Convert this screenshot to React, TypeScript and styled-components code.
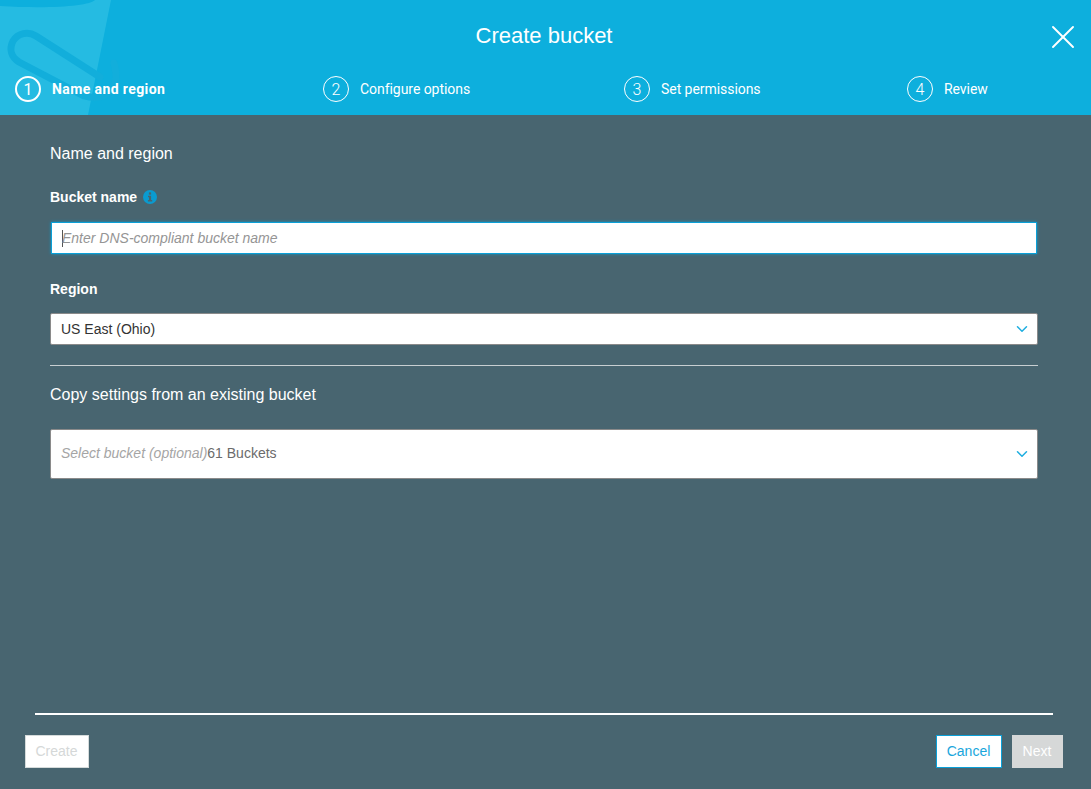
import React from "react";
import styled, { createGlobalStyle } from "styled-components";
import { ChevronDown, X } from "lucide-react";

const GlobalStyle = createGlobalStyle`
   html, body {
      margin: 0;
      height: 100%;
      background: #486570;
      font-family: "Liberation Sans", Arial, sans-serif;
   }
`;

const steps = [
   { num: 1, label: "Name and region" },
   { num: 2, label: "Configure options" },
   { num: 3, label: "Set permissions" },
   { num: 4, label: "Review" },
];

const App = () => {
   return (
      <Page>
         <GlobalStyle />
         <Header>
            <Watermark width="140" height="115" viewBox="0 0 140 115">
               <path d="M0 0H111L88 115H0Z" fill="#25bbe2" />
               <path d="M0 0H95C90 6 50 9 0 6Z" fill="#0dafdd" />
               <path
                  d="M100 77L36 36C28 31 18 33 13 41C9 49 11 57 19 62L84 96C98 100 123 97 114 63"
                  fill="none"
                  stroke="#12aedb"
                  strokeWidth="7"
                  strokeLinecap="round"
               />
            </Watermark>
            <Title>Create bucket</Title>
            <CloseButton>
               <X size={40} strokeWidth={1.15} color="#fff" />
            </CloseButton>
            <Steps>
               {steps.map((step) => (
                  <Step key={step.num}>
                     <StepNum active={step.num === 1}>{step.num}</StepNum>
                     <StepLabel active={step.num === 1}>{step.label}</StepLabel>
                  </Step>
               ))}
            </Steps>
         </Header>

         <Body>
            <SectionTitle>Name and region</SectionTitle>
            <FieldLabel>
               Bucket name
               <InfoIcon width="14" height="14" viewBox="0 0 14 14">
                  <circle cx="7" cy="7" r="7" fill="#0a9bd0" />
                  <rect x="5.9" y="2.4" width="2.2" height="2.2" fill="#486570" />
                  <path d="M5 5.8H8.1V10H9.2V11.4H4.9V10H6V7.2H5Z" fill="#486570" />
               </InfoIcon>
            </FieldLabel>
            <NameInput>
               <Caret />
               <InputPlaceholder>Enter DNS-compliant bucket name</InputPlaceholder>
            </NameInput>

            <RegionLabel>Region</RegionLabel>
            <SelectBox height={32}>
               <SelectValue>US East (Ohio)</SelectValue>
               <ChevronDown size={18} strokeWidth={2} color="#1eaee0" />
            </SelectBox>

            <Divider />

            <CopyTitle>Copy settings from an existing bucket</CopyTitle>
            <SelectBox height={50}>
               <BucketText>
                  <Placeholder light>Select bucket (optional)</Placeholder>
                  <BucketCount>61 Buckets</BucketCount>
               </BucketText>
               <ChevronDown size={18} strokeWidth={2} color="#1eaee0" />
            </SelectBox>
         </Body>

         <Footer>
            <FooterRule />
            <FooterButtons>
               <CreateButton>Create</CreateButton>
               <RightButtons>
                  <CancelButton>Cancel</CancelButton>
                  <NextButton>Next</NextButton>
               </RightButtons>
            </FooterButtons>
         </Footer>
      </Page>
   );
};

const Page = styled.div`
   display: flex;
   flex-direction: column;
   height: 789px;
   overflow: hidden;
   background: #486570;
`;

const Header = styled.header`
   position: relative;
   height: 115px;
   flex-shrink: 0;
   overflow: hidden;
   background: #0dafdd;
`;

const Watermark = styled.svg`
   position: absolute;
   left: 0;
   top: 0;
`;

const Title = styled.h1`
   position: relative;
   margin: 0;
   padding: 23px 3px 0 0;
   height: 49px;
   font-size: 22px;
   line-height: 26px;
   font-weight: 400;
   text-align: center;
   color: #fff;
`;

const CloseButton = styled.div`
   position: absolute;
   right: 8px;
   top: 17px;
   width: 40px;
   height: 40px;
`;

const Steps = styled.div`
   position: relative;
   display: grid;
   grid-template-columns: 308px 301px 283px 1fr;
   padding: 4px 0 0 15px;
`;

const Step = styled.div`
   display: flex;
   align-items: center;
   height: 26px;
`;

const StepNum = styled.span<{ active?: boolean }>`
   display: flex;
   align-items: center;
   justify-content: center;
   box-sizing: border-box;
   width: 26px;
   height: 26px;
   margin-right: 11px;
   border: ${(p) => (p.active ? "2px" : "1px")} solid #fff;
   border-radius: 50%;
   font-family: Roboto, sans-serif;
   font-size: 16px;
   font-weight: ${(p) => (p.active ? 400 : 300)};
   color: #fff;
`;

const StepLabel = styled.span<{ active?: boolean }>`
   font-family: Roboto, sans-serif;
   font-size: 14px;
   font-weight: ${(p) => (p.active ? 700 : 400)};
   letter-spacing: ${(p) => (p.active ? "0.4px" : "-0.05px")};
   color: #fff;
`;

const Body = styled.main`
   flex: 1;
   padding: 29px 53px 0 50px;
`;

const SectionTitle = styled.div`
   font-size: 16px;
   line-height: 20px;
   color: #fff;
`;

const FieldLabel = styled.div`
   display: flex;
   align-items: center;
   margin-top: 25px;
   font-size: 14px;
   line-height: 16px;
   font-weight: 700;
   color: #fff;
`;

const InfoIcon = styled.svg`
   margin-left: 6px;
`;

const NameInput = styled.div`
   display: flex;
   align-items: center;
   box-sizing: border-box;
   height: 32px;
   margin: 17px 1px 0 1px;
   padding-left: 10px;
   border: 1px solid #0aa0d8;
   box-shadow: 0 0 3px rgba(10, 160, 216, 0.8);
   background: #fff;
`;

const Caret = styled.span`
   width: 1px;
   height: 17px;
   background: #555;
`;

const Placeholder = styled.span<{ light?: boolean }>`
   font-size: 14px;
   font-style: italic;
   color: ${(p) => (p.light ? "#a5a5a5" : "#959595")};
`;

const InputPlaceholder = styled(Placeholder)`
   margin-left: -1px;
`;

const RegionLabel = styled.div`
   margin-top: 27px;
   font-size: 14px;
   line-height: 16px;
   font-weight: 700;
   color: #fff;
`;

const SelectBox = styled.div<{ height: number }>`
   display: flex;
   align-items: center;
   justify-content: space-between;
   box-sizing: border-box;
   height: ${(p) => p.height}px;
   margin: 16px 0 0;
   padding: 0 6px 0 10px;
   border: 1px solid #8a8a8a;
   border-radius: 2px;
   background: #fff;
`;

const SelectValue = styled.span`
   font-size: 14px;
   color: #333;
`;

const BucketText = styled.div`
   margin-bottom: 2px;
`;

const BucketCount = styled.span`
   font-size: 14px;
   color: #6b6b6b;
`;

const Divider = styled.hr`
   height: 1px;
   margin: 20px 0 0;
   border: 0;
   background: #c8cfd2;
`;

const CopyTitle = styled.div`
   margin-top: 19px;
   margin-bottom: 24px;
   font-size: 16px;
   line-height: 20px;
   color: #fff;
`;

const Footer = styled.footer`
   flex-shrink: 0;
   height: 76px;
`;

const FooterRule = styled.div`
   height: 2px;
   margin: 0 38px 0 35px;
   background: #fff;
`;

const FooterButtons = styled.div`
   display: flex;
   justify-content: space-between;
   padding: 20px 28px 0 25px;
`;

const RightButtons = styled.div`
   display: flex;
   gap: 10px;
`;

const BaseButton = styled.button`
   box-sizing: border-box;
   height: 33px;
   padding: 0 1px 2px 0;
   font-family: "Liberation Sans", Arial, sans-serif;
   font-size: 14px;
   border-radius: 0;
`;

const CreateButton = styled(BaseButton)`
   width: 64px;
   border: 1px solid #d5dbdb;
   background: #fff;
   color: #d5d8d8;
`;

const CancelButton = styled(BaseButton)`
   width: 66px;
   border: 1px solid #0aa0d8;
   background: #fff;
   color: #1aa6dc;
`;

const NextButton = styled(BaseButton)`
   width: 51px;
   border: 0;
   background: #d6d8d8;
   color: #fff;
`;

export default App;
